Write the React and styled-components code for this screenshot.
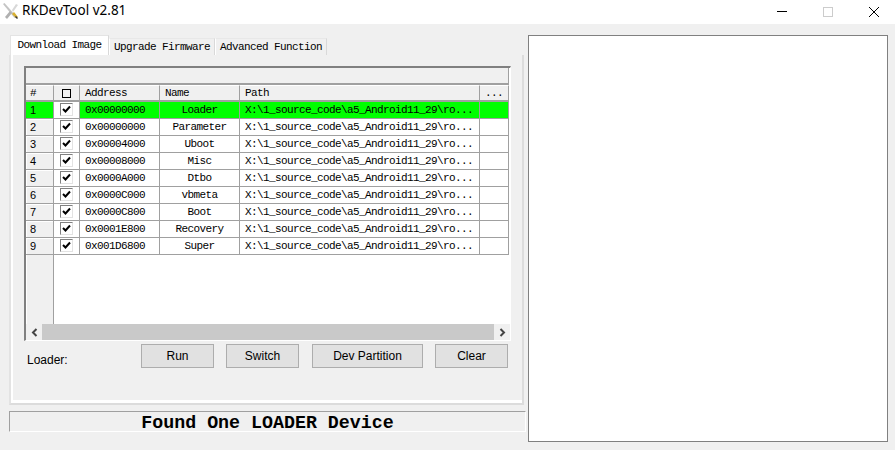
import React from 'react'
import styled, { createGlobalStyle } from 'styled-components'

const mono = `"Liberation Mono", "DejaVu Sans Mono", monospace`
const line = '#a0a0a0'
const columns = '28px 26px 80px 80px 240px 29px'

const Global = createGlobalStyle`
  html, body { margin: 0; padding: 0; background: #f0f0f0; }
  body { width: 895px; height: 450px; overflow: hidden; }
`

const Window = styled.div`
  width: 895px;
  height: 450px;
  display: flex;
  flex-direction: column;
  background: #f0f0f0;
`

const TitleBar = styled.div`
  height: 24px;
  background: #fff;
  display: flex;
  align-items: center;
  flex: none;
`

const Title = styled.span`
  font: 13.5px "Noto Sans", "Open Sans", sans-serif;
  color: #000;
  margin-left: 3px;
  flex: 1;
  padding-bottom: 4px;
`

const AppIcon = styled.svg`
  width: 18px;
  height: 18px;
  margin-left: 1px;
  margin-top: -6px;
  margin-bottom: -4px;
`

const WinControls = styled.div`
  display: flex;
  align-items: center;
  margin-right: -2px;
`

const WinButton = styled.svg`
  width: 46px;
  height: 12px;
  display: block;
`

const Body = styled.div`
  flex: 1;
  display: flex;
  padding: 11px 0 0 9px;
  gap: 2px;
`

const LeftColumn = styled.div`
  width: 517px;
  display: flex;
  flex-direction: column;
`

const TabStrip = styled.div`
  display: flex;
  align-items: flex-end;
  height: 20px;
  padding-left: 1px;
`

const Tab = styled.div`
  height: ${p => (p.$active ? 20 : 17)}px;
  width: ${p => p.$w}px;
  box-sizing: border-box;
  font: 11px/16px ${mono};
  letter-spacing: -0.6px;
  color: #000;
  text-align: center;
  background: ${p => (p.$active ? '#fff' : '#f0f0f0')};
  border-top: 1px solid ${p => (p.$active ? '#e4e4e4' : '#e8e8e8')};
  border-left: 1px solid ${p => (p.$active ? '#e4e4e4' : '#fff')};
  border-right: 1px solid #d9d9d9;
  padding-top: ${p => (p.$active ? 1 : 0)}px;
`

const Panel = styled.div`
  width: 515px;
  height: 350px;
  box-sizing: border-box;
  border-left: 2px solid;
  border-color: #e3e3e3;
  border-right: 2px solid #dcdcdc;
  border-bottom: 2px solid #dcdcdc;
  box-shadow: inset 2px -3px 0 #fff;
  padding: 11px 0 0 13px;
`

const ListView = styled.div`
  width: 487px;
  height: 275px;
  box-sizing: border-box;
  border-left: 2px solid #808080;
  border-top: 2px solid #808080;
  border-right: 1px solid #fff;
  border-bottom: 1px solid #fff;
  display: flex;
  flex-direction: column;
  background: #fff;
`

const GroupBar = styled.div`
  height: 17px;
  flex: none;
  box-sizing: border-box;
  background: #f0f0f0;
  border-right: 1px solid ${line};
  border-bottom: 2px solid ${line};
  width: 483px;
`

const GridRow = styled.div`
  display: grid;
  grid-template-columns: ${columns};
  height: 17px;
  flex: none;
`

const Cell = styled.div`
  box-sizing: border-box;
  font: 11px/17px ${mono};
  letter-spacing: -0.6px;
  color: #000;
  white-space: nowrap;
  overflow: hidden;
  padding-left: ${p => (p.$center ? 0 : 5)}px;
  text-align: ${p => (p.$center ? 'center' : 'left')};
  background: ${p => (p.$green ? '#00ff00' : '#fff')};
  border-right: 1px solid ${line};
  border-bottom: 1px solid ${line};
`

const HeadCell = styled(Cell)`
  background: #f0f0f0;
  border-top: 1px solid #fff;
  border-bottom: 2px solid ${line};
  line-height: 15px;
`

const HashCell = styled(HeadCell)`
  padding-left: 4px;
`

const NumCell = styled(Cell)`
  font: 11px/17px "Liberation Sans", sans-serif;
  letter-spacing: 0;
  background: ${p => (p.$green ? '#00ff00' : '#f0f0f0')};
  box-shadow: ${p => (p.$green ? 'none' : 'inset 1px 1px 0 #fff')};
  padding-left: 4px;
`

const CheckCell = styled(Cell)`
  display: flex;
  align-items: flex-start;
  justify-content: center;
  padding: 0;
`

const Check = styled.span`
  width: 13px;
  height: 13px;
  box-sizing: border-box;
  background: #fff;
  border: 1px solid #e3e3e3;
  border-left-color: #808080;
  border-top-color: #808080;
  display: flex;
  align-items: center;
  justify-content: center;
  margin-top: 1px;
`

const HeadBox = styled.span`
  display: block;
  width: 9px;
  height: 9px;
  border: 1px solid #000;
  box-sizing: border-box;
  margin: 3px auto 0;
`

const Filler = styled.div`
  flex: 1;
  display: grid;
  grid-template-columns: ${columns};
`

const FillerNum = styled.div`
  background: #f0f0f0;
  border-right: 1px solid ${line};
  box-sizing: border-box;
  box-shadow: inset 1px 0 0 #fff;
`

const ScrollBar = styled.div`
  height: 16px;
  flex: none;
  display: flex;
  background: #f0f0f0;
`

const ScrollArrow = styled.div`
  width: 16px;
  display: flex;
  align-items: center;
  justify-content: center;
  flex: none;
`

const ScrollThumb = styled.div`
  flex: 1;
  background: #c9c9c9;
`

const Actions = styled.div`
  display: flex;
  margin-top: 3px;
  width: 484px;
`

const LoaderLabel = styled.span`
  font: 12px/14px "Liberation Sans", sans-serif;
  color: #000;
  width: 117px;
  padding: 9px 0 0 3px;
  box-sizing: border-box;
  flex: none;
`

const Button = styled.button`
  width: ${p => p.$w}px;
  height: 24px;
  margin-right: ${p => p.$gap}px;
  box-sizing: border-box;
  padding: 0 0 1px;
  background: #e1e1e1;
  border: 1px solid #adadad;
  font: 12px "Liberation Sans", sans-serif;
  color: #000;
  flex: none;
`

const StatusBar = styled.div`
  margin-top: 6px;
  height: 21px;
  box-sizing: border-box;
  border-top: 1px solid ${line};
  border-left: 1px solid ${line};
  border-right: 1px solid #fff;
  border-bottom: 1px solid #fff;
  text-align: center;
  font: bold 18.3px/23px ${mono};
  color: #000;
`

const RightPane = styled.div`
  width: 360px;
  height: 407px;
  box-sizing: border-box;
  background: #fff;
  border: 1px solid #808080;
`

const paths = 'X:\\1_source_code\\a5_Android11_29\\ro...'

const rows = [
  ['0x00000000', 'Loader'],
  ['0x00000000', 'Parameter'],
  ['0x00004000', 'Uboot'],
  ['0x00008000', 'Misc'],
  ['0x0000A000', 'Dtbo'],
  ['0x0000C000', 'vbmeta'],
  ['0x0000C800', 'Boot'],
  ['0x0001E800', 'Recovery'],
  ['0x001D6800', 'Super'],
]

const CheckMark = () => (
  <svg width="9" height="9" viewBox="0 0 9 9">
    <path d="M1 4 L3.5 6.5 L8 1.5" fill="none" stroke="#000" strokeWidth="2" />
  </svg>
)

const Row = ({ index, address, name }) => {
  const green = index === 0
  return (
    <GridRow>
      <NumCell $green={green}>{index + 1}</NumCell>
      <CheckCell><Check><CheckMark /></Check></CheckCell>
      <Cell $green={green}>{address}</Cell>
      <Cell $green={green} $center>{name}</Cell>
      <Cell $green={green}>{paths}</Cell>
      <Cell $green={green} />
    </GridRow>
  )
}

export default function App() {
  return (
    <Window>
      <Global />
      <TitleBar>
        <AppIcon viewBox="0 0 18 18">
          <path d="M2 2 L3.5 1 L15 14 L13.5 16 Z" fill="#c4c4c4" />
          <path d="M11 8 L15 2 L17 3 L12 10 Z" fill="#d8d8d8" />
          <path d="M9 9 L4 15 L6 17 L11 11 Z" fill="#b0b0b0" />
          <path d="M11 12 L15 16 L17 15 L13 10 Z" fill="#d8b030" />
          <path d="M14 15 L16 17 L17 16 L15 14 Z" fill="#333" />
        </AppIcon>
        <Title>RKDevTool v2.81</Title>
        <WinControls>
          <WinButton viewBox="0 0 46 12">
            <path d="M18 5.5 H28" stroke="#000" strokeWidth="1" />
          </WinButton>
          <WinButton viewBox="0 0 46 12">
            <rect x="18.5" y="1.5" width="9" height="9" fill="none" stroke="#ccc" />
          </WinButton>
          <WinButton viewBox="0 0 46 12">
            <path d="M18 1 L28 11 M28 1 L18 11" stroke="#000" strokeWidth="1" />
          </WinButton>
        </WinControls>
      </TitleBar>
      <Body>
        <LeftColumn>
          <TabStrip>
            <Tab $active $w={99}>Download Image</Tab>
            <Tab $w={106}>Upgrade Firmware</Tab>
            <Tab $w={112}>Advanced Function</Tab>
          </TabStrip>
          <Panel>
            <ListView>
              <GroupBar />
              <GridRow>
                <HashCell>#</HashCell>
                <HeadCell $center><HeadBox /></HeadCell>
                <HeadCell>Address</HeadCell>
                <HeadCell>Name</HeadCell>
                <HeadCell>Path</HeadCell>
                <HeadCell $center>...</HeadCell>
              </GridRow>
              {rows.map(([address, name], i) => (
                <Row key={i} index={i} address={address} name={name} />
              ))}
              <Filler><FillerNum /></Filler>
              <ScrollBar>
                <ScrollArrow>
                  <svg width="7" height="9" viewBox="0 0 7 9"><path d="M5.5 1 L2 4.5 L5.5 8" fill="none" stroke="#444" strokeWidth="2" /></svg>
                </ScrollArrow>
                <ScrollThumb />
                <ScrollArrow>
                  <svg width="7" height="9" viewBox="0 0 7 9"><path d="M1.5 1 L5 4.5 L1.5 8" fill="none" stroke="#444" strokeWidth="2" /></svg>
                </ScrollArrow>
              </ScrollBar>
            </ListView>
            <Actions>
              <LoaderLabel>Loader:</LoaderLabel>
              <Button $w={73} $gap={12}>Run</Button>
              <Button $w={73} $gap={13}>Switch</Button>
              <Button $w={111} $gap={12}>Dev Partition</Button>
              <Button $w={73} $gap={0}>Clear</Button>
            </Actions>
          </Panel>
          <StatusBar>Found One LOADER Device</StatusBar>
        </LeftColumn>
        <RightPane />
      </Body>
    </Window>
  )
}
